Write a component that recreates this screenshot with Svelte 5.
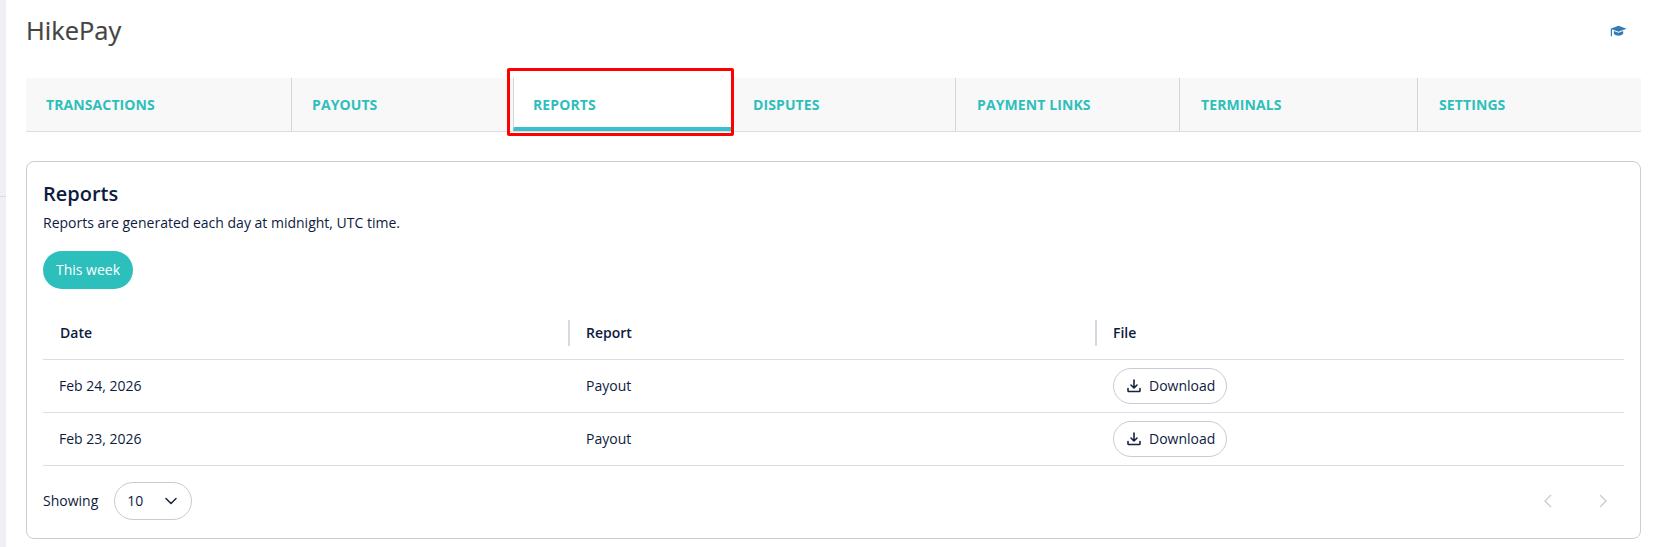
<script lang="ts">
	const tabs = ['TRANSACTIONS', 'PAYOUTS', 'REPORTS', 'DISPUTES', 'PAYMENT LINKS', 'TERMINALS', 'SETTINGS'];
	const active = 'REPORTS';
	const rows = [
		{ date: 'Feb 24, 2026', report: 'Payout' },
		{ date: 'Feb 23, 2026', report: 'Payout' }
	];
</script>

<div class="page">
	<aside class="rail"><span class="rail__line"></span></aside>

	<main class="content">
		<header class="top">
			<h1 class="brand">HikePay</h1>
			<svg class="cap" viewBox="0 0 16 12" width="17" height="13" aria-hidden="true">
				<path d="M8 .6 15.6 3.4 8 6.2.4 3.4z" fill="#337ab7" />
				<path d="M3.6 5.6 8 7.2l4.4-1.6v2.6C11.4 9.4 9.8 10 8 10S4.6 9.400 3.600 8.200z" fill="#337ab7" />
				<path d="M1.300 3.600v6.900" stroke="#337ab7" stroke-width="1.100" />
			</svg>
		</header>

		<nav class="tabs">
			{#each tabs as tab}
				<a class="tab" class:tab--active={tab === active} href="#top">{tab}</a>
			{/each}
			<span class="marker"></span>
		</nav>

		<section class="card">
			<h2 class="card__title">Reports</h2>
			<p class="card__text">Reports are generated each day at midnight, UTC time.</p>
			<button class="pill">This week</button>

			<table class="table">
				<thead>
					<tr>
						<th>Date</th>
						<th><span class="sep"></span>Report</th>
						<th><span class="sep"></span>File</th>
					</tr>
				</thead>
				<tbody>
					{#each rows as row}
						<tr>
							<td>{row.date}</td>
							<td>{row.report}</td>
							<td>
								<button class="download">
									<svg viewBox="0 0 16 16" width="16" height="16" fill="none" stroke="#16233f" stroke-width="1.6" stroke-linecap="round" stroke-linejoin="round" aria-hidden="true">
										<path d="M8 2v7.500M5 7l3 3 3-3" />
										<path d="M2 10.500v2.200c0 .5.300.8.800.8h10.400c.5 0 .8-.3.800-.8v-2.200" />
									</svg>
									Download
								</button>
							</td>
						</tr>
					{/each}
				</tbody>
			</table>

			<footer class="foot">
				<div class="foot__left">
					<span>Showing</span>
					<div class="select">
						<span>10</span>
						<svg viewBox="0 0 12 8" width="12" height="8" fill="none" stroke="#16233f" stroke-width="1.500" stroke-linecap="round" stroke-linejoin="round" aria-hidden="true">
							<path d="M1 1.500 6 6.500 11 1.500" />
						</svg>
					</div>
				</div>
				<div class="pager">
					<svg viewBox="0 0 8 14" width="8" height="14" fill="none" stroke="#c9ccd6" stroke-width="1.400" aria-hidden="true"><path d="M7 1 1 7l6 6" /></svg>
					<svg viewBox="0 0 8 14" width="8" height="14" fill="none" stroke="#c9ccd6" stroke-width="1.400" aria-hidden="true"><path d="M1 1l6 6-6 6" /></svg>
				</div>
			</footer>
		</section>
	</main>
</div>

<style>
	:global(body) {
		margin: 0;
		background: #fff;
	}

	.page {
		display: flex;
		height: 547px;
		overflow: hidden;
		font-family: 'Open Sans', 'Liberation Sans', sans-serif;
		color: #0d1b3e;
	}

	.rail {
		position: relative;
		width: 6px;
		background: #eef0f5;
		flex: none;
	}

	.rail__line {
		position: absolute;
		left: 0;
		right: 0;
		top: 196px;
		height: 1px;
		background: #dcdee6;
	}

	.content {
		position: relative;
		flex: 1;
		padding: 0 15px 0 20px;
		min-width: 0;
	}

	.top {
		display: flex;
		align-items: center;
		justify-content: space-between;
		height: 78px;
		padding-bottom: 19px;
		box-sizing: border-box;
	}

	.brand {
		margin: 0;
		font-size: 25.500px;
		font-weight: 400;
		color: #444;
		-webkit-text-stroke: 0.2px #444;
	}

	.cap {
		margin-right: 14px;
		margin-top: 4px;
	}

	.tabs {
		position: relative;
		display: grid;
		grid-template-columns: 265px 222px 220px 222px 224px 238px 1fr;
		height: 54px;
		background: #f8f8f9;
		border-bottom: 1px solid #dcdde4;
		box-sizing: border-box;
	}

	.tab {
		display: flex;
		align-items: center;
		padding-left: 21px;
		font-size: 14px;
		font-weight: 700;
		letter-spacing: 0.1px;
		color: #2dbfbb;
		text-decoration: none;
		border-left: 1px solid #d4d5da;
	}

	.tab:first-child {
		border-left: 0;
		padding-left: 20px;
	}

	.tab:nth-child(3),
	.tab:nth-child(4) {
		padding-left: 19px;
	}

	.tab:nth-child(2) {
		padding-left: 20px;
	}

	.tab--active {
		background: #fff;
		border-bottom: 4px solid #38bfcc;
		padding-top: 4px;
	}

	/* marca roja de la captura */
	.marker {
		position: absolute;
		left: 481px;
		top: -10px;
		width: 227px;
		height: 68px;
		border: 3px solid #f00;
		border-radius: 2px;
		box-sizing: border-box;
		pointer-events: none;
	}

	.card {
		margin-top: 29px;
		height: 378px;
		box-sizing: border-box;
		padding: 18px 16px 0 16px;
		border: 1px solid #cbccd6;
		border-radius: 8px;
	}

	.card__title {
		margin: 0;
		font-size: 20px;
		line-height: 27px;
		font-weight: 600;
	}

	.card__text {
		margin: 7px 0 0;
		font-size: 14px;
		line-height: 18px;
	}

	.pill {
		display: block;
		margin-top: 19px;
		width: 90px;
		height: 38px;
		padding: 0 0 2px;
		border: 0;
		border-radius: 19px;
		background: #2dbfbb;
		color: #fff;
		font: 400 14px 'Open Sans', sans-serif;
	}

	.table {
		width: 100%;
		margin-top: 18px;
		border-collapse: collapse;
		table-layout: fixed;
		font-size: 14px;
	}

	.table th:nth-child(1) {
		width: 525px;
	}

	.table th:nth-child(2) {
		width: 527px;
	}

	.table th {
		position: relative;
		box-sizing: border-box;
		height: 52px;
		padding: 0 0 0 17px;
		text-align: left;
		font-weight: 600;
		border-bottom: 1px solid #dcdde4;
	}

	.table th:nth-child(2),
	.table th:nth-child(3) {
		padding-left: 18px;
	}

	.sep {
		position: absolute;
		left: 0;
		top: 13px;
		height: 26px;
		width: 2px;
		background: #d8d9e0;
	}

	.table td {
		height: 52px;
		padding: 0 0 0 16px;
		border-bottom: 1px solid #dcdde4;
	}

	.table td:nth-child(2),
	.table td:nth-child(3) {
		padding-left: 18px;
	}

	.download {
		display: flex;
		align-items: center;
		gap: 7px;
		width: 114px;
		height: 36px;
		padding: 0 0 0 12px;
		border: 1px solid #c9cad5;
		border-radius: 18px;
		background: #fff;
		color: #0d1b3e;
		font: 400 14px 'Open Sans', sans-serif;
	}

	.foot {
		display: flex;
		align-items: center;
		justify-content: space-between;
		margin-top: 16px;
		font-size: 14px;
	}

	.foot__left {
		display: flex;
		align-items: center;
		gap: 16px;
	}

	.select {
		display: flex;
		align-items: center;
		justify-content: space-between;
		width: 78px;
		height: 38px;
		box-sizing: border-box;
		padding: 0 14px 0 12px;
		border: 1px solid #c9cad5;
		border-radius: 19px;
	}

	.pager {
		display: flex;
		gap: 47px;
		margin-right: 17px;
	}
</style>
